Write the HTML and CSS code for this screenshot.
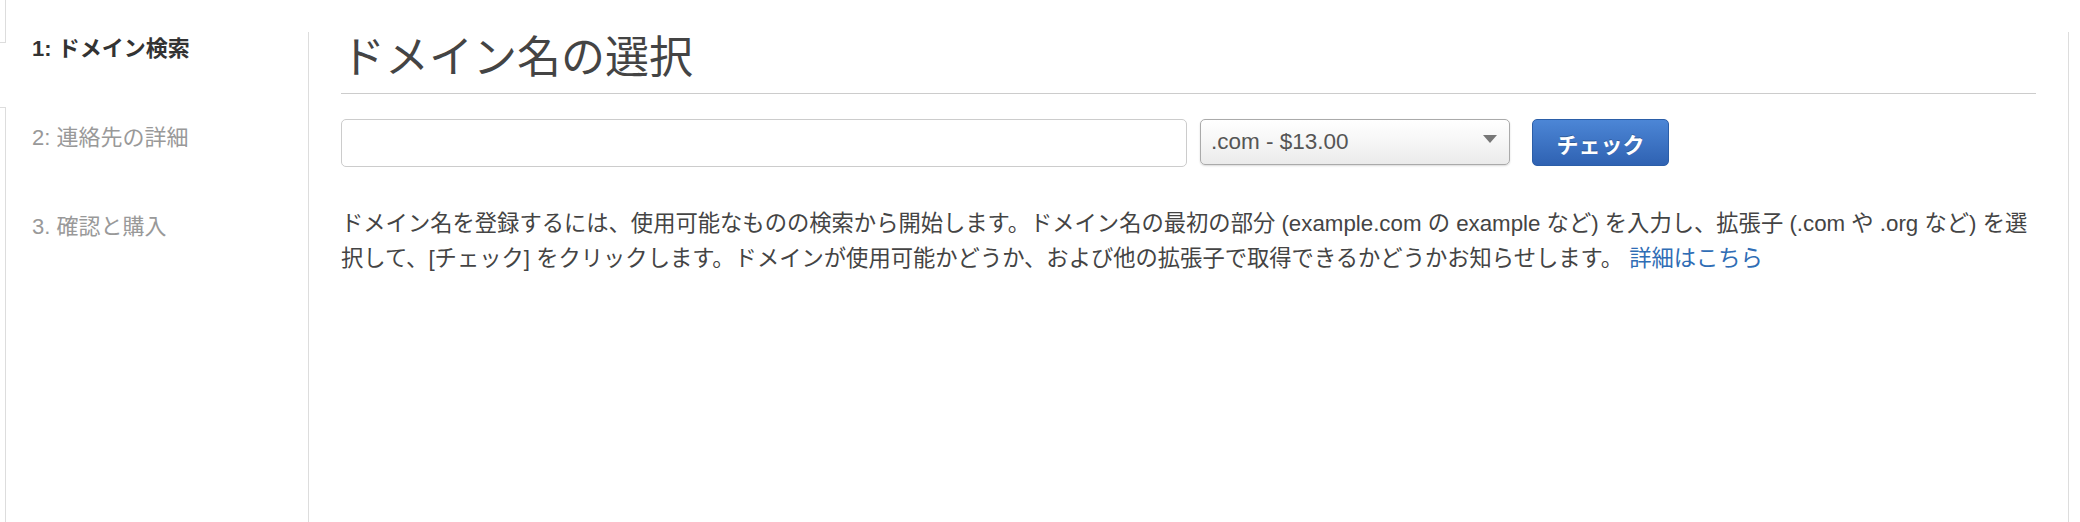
FILE: index.html
```html
<!DOCTYPE html>
<html lang="ja">
<head>
<meta charset="utf-8">
<title>ドメイン名の選択</title>
<link rel="stylesheet" href="styles.css">
</head>
<body>
<div class="page">
  <div class="edge">
    <div class="edge-top"></div>
    <div class="edge-bottom"></div>
  </div>
  <nav class="sidebar">
    <div class="step active">1: ドメイン検索</div>
    <div class="step">2: 連絡先の詳細</div>
    <div class="step">3. 確認と購入</div>
  </nav>
  <main class="main">
    <h1 class="title">ドメイン名の選択</h1>
    <div class="controls">
      <input class="domain-input" type="text">
      <div class="select">
        <span class="select-text">.com - $13.00</span>
        <span class="select-arrow"></span>
      </div>
      <button class="check-btn">チェック</button>
    </div>
    <p class="desc">ドメイン名を登録するには、使用可能なものの検索から開始します。ドメイン名の最初の部分 (example.com の example など) を入力し、拡張子 (.com や .org など) を選択して、[チェック] をクリックします。ドメインが使用可能かどうか、および他の拡張子で取得できるかどうかお知らせします。 <a class="link" href="#">詳細はこちら</a></p>
  </main>
</div>
</body>
</html>
```

FILE: styles.css
```css
html, body {
  margin: 0;
  padding: 0;
  background: #fff;
}
body {
  font-family: "Liberation Sans", "Noto Sans CJK JP", sans-serif;
  color: #333;
}
.page {
  display: flex;
  height: 522px;
  overflow: hidden;
}
.edge {
  width: 6px;
  display: flex;
  flex-direction: column;
  flex-shrink: 0;
}
.edge-top {
  height: 42px;
  border-right: 1px solid #ddd;
  border-bottom: 1px solid #ddd;
}
.edge-bottom {
  margin-top: 64px;
  flex: 1;
  border-right: 1px solid #ddd;
  border-top: 1px solid #ddd;
}
.sidebar {
  width: 276px;
  padding-left: 26px;
  padding-top: 34px;
  flex-shrink: 0;
  display: flex;
  flex-direction: column;
  gap: 59px;
}
.step {
  font-size: 22px;
  line-height: 30px;
  color: #999;
  white-space: nowrap;
}
.step.active {
  color: #333;
  font-weight: bold;
}
.main {
  margin-top: 32px;
  width: 1695px;
  padding: 0 32px;
  border-left: 1px solid #ddd;
  border-right: 1px solid #ddd;
  flex-shrink: 0;
}
.title {
  margin: 0;
  font-size: 44px;
  font-weight: normal;
  color: #444;
  line-height: 52px;
  border-bottom: 1px solid #ccc;
  box-sizing: border-box;
  height: 62px;
}
.controls {
  display: flex;
  align-items: flex-start;
  margin-top: 25px;
}
.domain-input {
  width: 846px;
  height: 48px;
  box-sizing: border-box;
  border: 1px solid #ccc;
  border-radius: 5px;
  margin: 0;
  padding: 0 10px;
  font-size: 21px;
  background: #fff;
}
.select {
  margin-left: 13px;
  width: 310px;
  height: 46px;
  box-sizing: border-box;
  border: 1px solid #aaa;
  border-radius: 5px;
  background: linear-gradient(#ffffff 0%, #f6f6f6 50%, #ebebeb 100%);
  box-shadow: 0 1px 2px rgba(0, 0, 0, 0.15);
  display: flex;
  align-items: center;
  justify-content: space-between;
  padding: 0 12px 0 10px;
}
.select-text {
  font-size: 22.5px;
  color: #555;
}
.select-arrow {
  width: 0;
  height: 0;
  border-left: 7px solid transparent;
  border-right: 7px solid transparent;
  border-top: 8px solid #777;
  margin-top: -6px;
}
.check-btn {
  margin-left: 22px;
  width: 137px;
  height: 47px;
  border: 1px solid #2b5ea8;
  border-radius: 5px;
  background: linear-gradient(#4c86d6, #2f62b2);
  color: #fff;
  font-family: "Liberation Sans", "Noto Sans CJK JP", sans-serif;
  font-size: 22px;
  font-weight: bold;
  text-shadow: 0 -1px 0 rgba(0, 0, 0, 0.25);
  padding: 0;
}
.desc {
  margin: 39px 0 0;
  font-size: 22.3px;
  line-height: 35px;
  color: #444;
}
.link {
  color: #2f6db5;
  text-decoration: none;
}
```
